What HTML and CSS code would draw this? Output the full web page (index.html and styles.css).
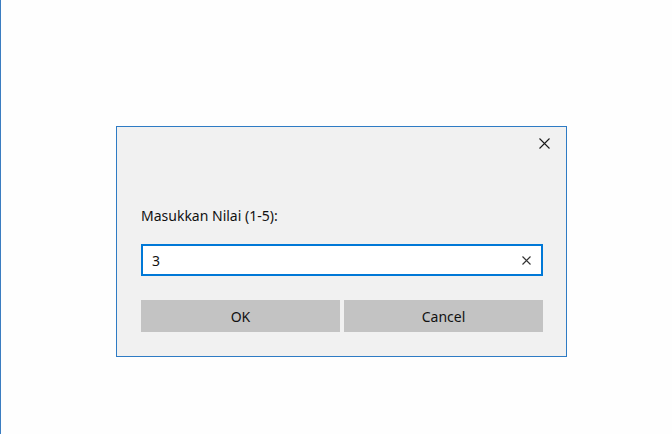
FILE: index.html
```html
<!DOCTYPE html>
<html>
<head>
<meta charset="utf-8">
<link rel="stylesheet" href="styles.css">
</head>
<body>
<div class="page">
  <div class="dialog">
    <div class="header">
      <button class="close" aria-label="Close">
        <svg width="11" height="11" viewBox="0 0 11 11"><path d="M0.5 0.5 L10.5 10.5 M10.5 0.5 L0.5 10.5" stroke="#1a1a1a" stroke-width="1.1" fill="none"/></svg>
      </button>
    </div>
    <div class="label">Masukkan Nilai (1-5):</div>
    <div class="input">
      <span class="value">3</span>
      <svg class="clear" width="9" height="9" viewBox="0 0 9 9"><path d="M0.5 0.5 L8.5 8.5 M8.5 0.5 L0.5 8.5" stroke="#333" stroke-width="1.1" fill="none"/></svg>
    </div>
    <div class="buttons">
      <button class="btn">OK</button>
      <button class="btn">Cancel</button>
    </div>
  </div>
</div>
</body>
</html>
```
FILE: styles.css
```css
html, body {
  margin: 0;
  padding: 0;
  background: #fefefe;
  height: 100%;
}
.page {
  box-sizing: border-box;
  height: 434px;
  border-left: 1px solid #3b7dc1;
  padding: 126px 0 0 115px;
  font-family: "Noto Sans", "Liberation Sans", sans-serif;
  font-size: 14px;
  color: #111;
}
.dialog {
  box-sizing: border-box;
  width: 451px;
  height: 231px;
  border: 1px solid #2e7bc4;
  background: #f1f1f1;
  padding: 0 23px 0 24px;
  display: flex;
  flex-direction: column;
}
.header {
  height: 32px;
  display: flex;
  justify-content: flex-end;
  margin-right: -16px;
}
.close {
  width: 30px;
  height: 32px;
  border: none;
  background: transparent;
  padding: 0;
  display: flex;
  align-items: center;
  justify-content: center;
}
.label {
  margin-top: 47px;
  line-height: 19px;
  height: 19px;
}
.input {
  box-sizing: border-box;
  margin-top: 19px;
  height: 32px;
  border: 2px solid #0078d7;
  background: #fff;
  display: flex;
  align-items: center;
  padding: 0 10px 0 9px;
}
.value {
  flex: 1;
  line-height: 19px;
}
.buttons {
  margin-top: 24px;
  display: flex;
  gap: 4px;
}
.btn {
  flex: 1;
  height: 32px;
  border: none;
  background: #c3c3c3;
  font-family: inherit;
  font-size: 14px;
  color: #111;
  padding: 0;
}
```
